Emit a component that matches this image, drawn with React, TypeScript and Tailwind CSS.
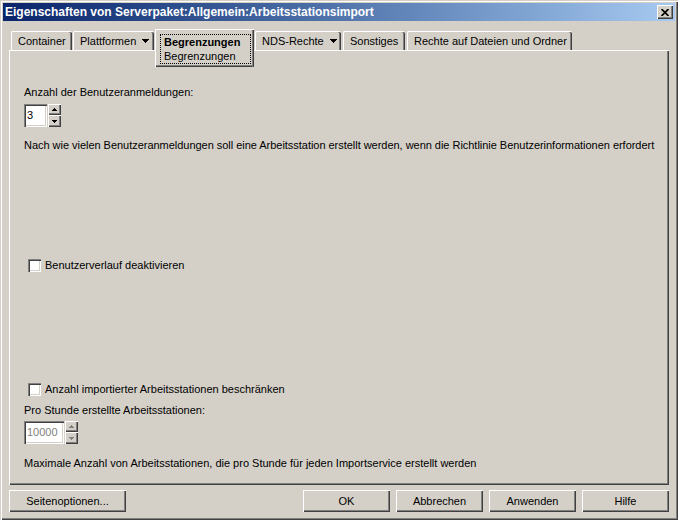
import React from "react";

const raised =
  "bg-[#d4d0c8] shadow-[inset_1px_1px_#ffffff,inset_-1px_-1px_#404040,inset_-2px_-2px_#808080]";
const sunken =
  "shadow-[inset_1px_1px_#808080,inset_2px_2px_#404040,inset_-1px_-1px_#ffffff,inset_-2px_-2px_#d4d0c8]";

function Arrow({ up, color }: { up?: boolean; color: string }) {
  return (
    <svg width="5" height="3" viewBox="0 0 5 3" shapeRendering="crispEdges">
      {up ? (
        <polygon points="2.5,0 5,3 0,3" fill={color} />
      ) : (
        <polygon points="0,0 5,0 2.5,3" fill={color} />
      )}
    </svg>
  );
}

function Spinner({
  value,
  fieldClass,
  disabled,
}: {
  value: string;
  fieldClass: string;
  disabled?: boolean;
}) {
  const arrowColor = disabled ? "#808080" : "#000000";
  return (
    <div className="flex h-[23px]">
      <div
        className={`${fieldClass} h-full bg-white ${sunken} flex items-center pl-[3px] ${
          disabled ? "text-[#808080]" : "text-black"
        }`}
      >
        {value}
      </div>
      <div className="ml-[1px] flex w-[13px] flex-col">
        <div className={`h-[11px] ${raised} flex items-center justify-center`}>
          <Arrow up color={arrowColor} />
        </div>
        <div className={`h-[12px] ${raised} flex items-center justify-center`}>
          <Arrow color={arrowColor} />
        </div>
      </div>
    </div>
  );
}

function CheckRow({ label }: { label: string }) {
  return (
    <div className="flex h-[13px] items-center pl-[4px]">
      <div className={`h-[13px] w-[13px] bg-white ${sunken}`} />
      <span className="ml-[4px] leading-[13px]">{label}</span>
    </div>
  );
}

function DropTri() {
  return (
    <svg width="7" height="4" viewBox="0 0 7 4" className="ml-[6px]" shapeRendering="crispEdges">
      <polygon points="0,0 7,0 3.5,4" fill="#000" />
    </svg>
  );
}

const tab =
  "h-[19px] flex items-center pl-[6px] border-l border-t border-white rounded-tl-[2px] rounded-tr-[2px] shadow-[inset_-1px_0_#404040,inset_-2px_0_#808080]";

function Btn({ label, className }: { label: string; className: string }) {
  return (
    <div className={`${className} h-[22px] ${raised} flex items-center justify-center`}>
      {label}
    </div>
  );
}

export default function App() {
  return (
    <div className="h-[520px] w-[678px] bg-[#d4d0c8] p-[3px] font-['Liberation_Sans',Arial,sans-serif] text-[11px] leading-[13px] text-black shadow-[inset_1px_1px_#d4d0c8,inset_2px_2px_#ffffff,inset_-1px_-1px_#404040,inset_-2px_-2px_#808080]">
      <div className="flex h-full flex-col">
        {/* title bar */}
        <div className="flex h-[18px] items-center justify-between bg-gradient-to-r from-[#0a246a] to-[#a6caf0] pl-[2px] pr-[2px]">
          <span className="text-[12px] font-bold text-white">
            Eigenschaften von Serverpaket:Allgemein:Arbeitsstationsimport
          </span>
          <div className={`flex h-[14px] w-[16px] items-center justify-center ${raised}`}>
            <svg width="8" height="7" viewBox="0 0 8 7">
              <path d="M0.5 0 L7.5 7 M7.5 0 L0.5 7" stroke="#000" strokeWidth="1.7" />
            </svg>
          </div>
        </div>

        <div className="flex flex-1 flex-col px-[6px]">
          {/* tabs */}
          <div className="mt-[8px] flex h-[21px] items-end pl-[2px]">
            <div className={`${tab} w-[61px]`}>Container</div>
            <div className={`${tab} ml-[1px] w-[81px]`}>
              Plattformen
              <DropTri />
            </div>
            <div className="relative z-10 -mb-[17px] ml-[1px] h-[38px] w-[99px] self-end border-l border-t border-white bg-[#d4d0c8] pl-[4px] pt-[4px] shadow-[inset_-1px_0_#404040,inset_-2px_0_#808080,inset_0_-1px_#404040,inset_0_-2px_#808080]">
              <div className="h-[30px] w-[91px] border border-dotted border-black pl-[3px]">
                <div className="font-bold leading-[14px]">Begrenzungen</div>
                <div className="leading-[14px]">Begrenzungen</div>
              </div>
            </div>
            <div className={`${tab} ml-[1px] w-[86px]`}>
              NDS-Rechte
              <DropTri />
            </div>
            <div className={`${tab} ml-[2px] w-[62px]`}>Sonstiges</div>
            <div className={`${tab} ml-[2px] w-[165px]`}>Rechte auf Dateien und Ordner</div>
          </div>

          {/* page */}
          <div className="flex h-[435px] flex-col border-l border-t border-white pl-[14px] pt-[35px] shadow-[inset_-1px_-1px_#404040,inset_-2px_-2px_#808080]">
            <div>Anzahl der Benutzeranmeldungen:</div>
            <div className="mt-[5px]">
              <Spinner value="3" fieldClass="w-[23px]" />
            </div>
            <div className="mt-[12px] tracking-[-0.03px]">
              Nach wie vielen Benutzeranmeldungen soll eine Arbeitsstation erstellt werden, wenn die
              Richtlinie Benutzerinformationen erfordert
            </div>
            <div className="mt-[107px]">
              <CheckRow label="Benutzerverlauf deaktivieren" />
            </div>
            <div className="mt-[111px]">
              <CheckRow label="Anzahl importierter Arbeitsstationen beschränken" />
            </div>
            <div className="mt-[8px]">Pro Stunde erstellte Arbeitsstationen:</div>
            <div className="mt-[4px]">
              <Spinner value="10000" fieldClass="w-[40px]" disabled />
            </div>
            <div className="mt-[13px]">
              Maximale Anzahl von Arbeitsstationen, die pro Stunde für jeden Importservice erstellt
              werden
            </div>
          </div>

          {/* buttons */}
          <div className="mt-[5px] flex justify-between">
            <Btn label="Seitenoptionen..." className="w-[117px]" />
            <div className="flex gap-[6px]">
              <Btn label="OK" className="w-[87px]" />
              <Btn label="Abbrechen" className="w-[87px]" />
              <Btn label="Anwenden" className="w-[87px]" />
              <Btn label="Hilfe" className="w-[87px]" />
            </div>
          </div>
        </div>
      </div>
    </div>
  );
}
